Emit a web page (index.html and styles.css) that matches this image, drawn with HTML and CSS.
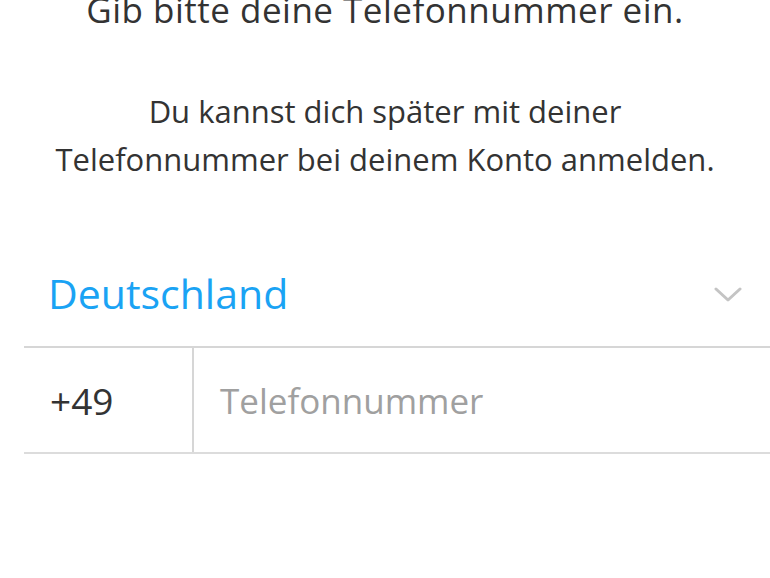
FILE: index.html
```html
<!DOCTYPE html>
<html lang="de">
<head>
<meta charset="utf-8">
<link rel="stylesheet" href="styles.css">
</head>
<body>
<div class="page">
  <h1 class="title">Gib bitte deine Telefonnummer ein.</h1>
  <p class="lead">Du kannst dich später mit deiner<br>Telefonnummer bei deinem Konto anmelden.</p>
  <div class="form">
    <div class="country">
      <span class="country-name">Deutschland</span>
      <svg class="chevron" width="28" height="16" viewBox="0 0 28 16"><path d="M2 2 L14 13 L26 2" fill="none" stroke="#c4c4c4" stroke-width="3" stroke-linecap="round" stroke-linejoin="round"/></svg>
    </div>
    <div class="phone-row">
      <div class="code">+49</div>
      <div class="number">Telefonnummer</div>
    </div>
  </div>
</div>
</body>
</html>
```
FILE: styles.css
```css
html, body {
  margin: 0;
  padding: 0;
  background: #ffffff;
}
body {
  font-family: "Open Sans", Lato, sans-serif;
  font-weight: 400;
  color: #333333;
  width: 770px;
  height: 578px;
  overflow: hidden;
}
.page {
  display: flex;
  flex-direction: column;
}
.title {
  margin: -10px 0 0 0;
  font-size: 35px;
  font-weight: 400;
  letter-spacing: 0.5px;
  line-height: 40px;
  text-align: center;
  color: #333333;
}
.lead {
  margin: 57px 0 0 0;
  font-size: 31px;
  line-height: 48px;
  text-align: center;
  color: #333333;
}
.form {
  margin: 72px 0 0 24px;
}
.country {
  display: flex;
  align-items: center;
  justify-content: space-between;
  height: 93px;
  padding: 0 28px 16px 24px;
  box-sizing: border-box;
  border-bottom: 2px solid #d6d6d6;
}
.country-name {
  font-size: 41px;
  color: #1aa3f4;
}
.chevron {
  display: block;
  margin-top: 4px;
}
.phone-row {
  display: flex;
  height: 104px;
  border-bottom: 2px solid #dcdcdc;
}
.code {
  border-right: 2px solid #d6d6d6;
  display: flex;
  align-items: center;
  padding-left: 26px;
  box-sizing: border-box;
  width: 170px;
  font-size: 37px;
  color: #333333;
}
.number {
  display: flex;
  align-items: center;
  padding-left: 26px;
  font-size: 35px;
  color: #a0a0a0;
}
```
